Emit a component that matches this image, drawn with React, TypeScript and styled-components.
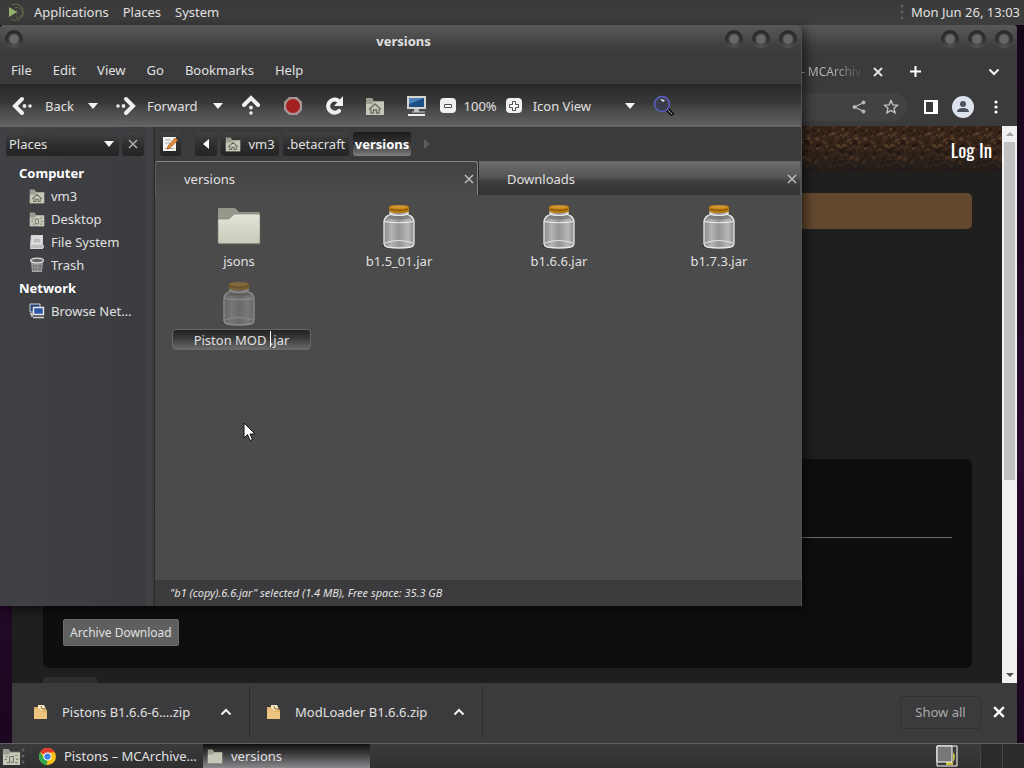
import React from "react";
import styled, { createGlobalStyle, css } from "styled-components";

const Global = createGlobalStyle`
  * { box-sizing: border-box; }
  body { margin: 0; background: #1a0820; font: 13px/18px "Noto Sans", sans-serif; color: #e0e0e0; }
  button, input, select { font: inherit; color: inherit; }
  button { border: 0; background: none; padding: 0; }
  a { color: inherit; text-decoration: none; }
`;

const Desktop = styled.div`
  display: grid;
  grid-template-rows: 25px 1fr 25px;
  height: 100vh;
  min-height: 480px;
  overflow: hidden;
`;

const TopPanel = styled.header`
  display: flex;
  align-items: center;
  padding: 0 4px 2px 8px;
  background: linear-gradient(#3a3a3a, #3e3e3e);
`;
const PanelMenu = styled.nav`
  display: flex;
  gap: 14px;
  margin-left: 7px;
  flex: 1;
`;
const Grip = styled.span`
  width: 4px;
  height: 18px;
  background: radial-gradient(circle, #5c5c5c 1px, transparent 2px) 0 0 / 4px 6px;
`;
const Clock = styled.time`
  margin-left: 7px;
  white-space: nowrap;
`;

const Workspace = styled.div`
  position: relative;
  background: linear-gradient(#140618, #2a0a30 60%, #1b0720);
`;

/* ---- windows ---- */
const frame = css`
  position: absolute;
  top: 0;
  display: flex;
  flex-direction: column;
  background: #3b3b3d;
`;
const BrowserWindow = styled.section`
  ${frame}
  left: 12px;
  right: 7px;
  bottom: 0;
  border-radius: 4px 4px 0 0;
`;
const FilesWindow = styled.section`
  ${frame}
  left: 0;
  width: calc(100% - 222px);
  height: calc(100% - 137px);
  border-right: 1px solid #505050;
  border-radius: 4px 4px 0 0;
  box-shadow: 3px 3px 12px rgba(0, 0, 0, 0.6);
`;
const TitleBar = styled.div`
  display: flex;
  align-items: flex-start;
  gap: 9px;
  height: 31px;
  padding: 5px 4px 0 5px;
  border-radius: 4px 4px 0 0;
  background: linear-gradient(#585858, #4c4c4d 12px, #404042 20px, #3b3b3d);
`;
const Title = styled.h1`
  flex: 1;
  margin: 2px 0 0;
  padding-left: 59px;
  font-size: 13px;
  line-height: 18px;
  text-align: center;
`;
const RoundButton = styled.button`
  width: 18px;
  height: 18px;
  border-radius: 50%;
  background:
    radial-gradient(circle, #686868 4px, transparent 6px),
    linear-gradient(#2a2a2a, #303030 55%, #565852);
`;

/* ---- browser ---- */
const TabStrip = styled.div`
  display: flex;
  align-items: center;
  justify-content: flex-end;
  height: 31px;
  padding-right: 17px;
`;
const BrowserTab = styled.div`
  display: flex;
  align-items: center;
  gap: 12px;
  font-size: 12px;
  white-space: nowrap;
`;
const TabLabel = styled.span`
  display: flex;
  justify-content: flex-end;
  background: linear-gradient(90deg, #b8b8b8 55%, #4a4a4a);
  background-clip: text;
  color: transparent;
`;
const IconButton = styled.button<{ $gap?: number }>`
  display: flex;
  margin-left: ${(p) => p.$gap ?? 0}px;
`;
const AddressRow = styled.div`
  display: flex;
  align-items: center;
  height: 39px;
  padding-right: 18px;
`;
const AddressField = styled.div`
  flex: 1;
  display: flex;
  align-items: center;
  justify-content: flex-end;
  height: 28px;
  padding-right: 8px;
  border-radius: 14px;
  background: #424244;
`;
const Viewport = styled.div`
  flex: 1;
  display: flex;
  min-height: 0;
`;
const Page = styled.main`
  flex: 1;
  display: flex;
  flex-direction: column;
  overflow: hidden;
  background: #1f1f1f;
`;
const Dirt = styled.div`
  position: relative;
  flex: none;
  height: 46px;
  display: flex;
  justify-content: flex-end;
  background: #35231a;
`;
const DirtArt = styled.svg`
  position: absolute;
  inset: 0;
  width: 100%;
  height: 100%;
`;
const LogIn = styled.a`
  position: relative;
  padding: 10px 10px 0 0;
  font: 19px/26px "Oswald", "Liberation Sans Narrow", "Noto Sans", sans-serif;
  color: #fff;
`;
const Banner = styled.div`
  flex: none;
  height: 36px;
  margin: 21px 30px 0 31px;
  border-radius: 5px;
  background: #63482f;
`;
const Card = styled.section`
  flex: 1;
  display: flex;
  flex-direction: column;
  align-items: flex-start;
  margin: 230px 30px 0 31px;
  padding: 78px 20px 22px;
  border-radius: 6px;
  background: #0e0e0e;
`;
const Rule = styled.hr`
  width: 100%;
  margin: 0;
  border: 0;
  border-top: 1px solid #6c6c6c;
`;
const ArchiveButton = styled.button`
  margin-top: auto;
  height: 27px;
  padding: 0 6px;
  border: 1px solid #6c6c6c;
  border-radius: 2px;
  background: #5f5f5f;
  font-size: 12px;
`;
const CutButton = styled.div`
  flex: none;
  width: 54px;
  height: 6px;
  margin: 9px 0 0 31px;
  border-radius: 3px 3px 0 0;
  background: #2e2e2e;
`;
const Scrollbar = styled.div`
  display: flex;
  flex-direction: column;
  align-items: center;
  justify-content: space-between;
  width: 15px;
  padding: 6px 0;
  background: #f1f1f1;
`;
const Thumb = styled.div`
  width: 11px;
  height: 62%;
  margin: 6px 0 auto;
  background: #c1c1c1;
`;
const Arrow = styled.span<{ $up?: boolean }>`
  border: 4px solid transparent;
  ${(p) => (p.$up ? "border-top: 0; border-bottom-color: #a3a3a3;" : "border-bottom: 0; border-top-color: #505050;")}
`;
const DownloadBar = styled.footer`
  display: flex;
  align-items: center;
  height: 60px;
  padding: 0 12px 2px 0;
`;
const Download = styled.div<{ $w: number; $pl: number }>`
  display: flex;
  align-items: center;
  width: ${(p) => p.$w}px;
  height: 50px;
  padding: 0 17px 0 ${(p) => p.$pl}px;
  border-right: 1px solid #2a2a2b;
  white-space: nowrap;
`;
const DownloadName = styled.span`
  flex: 1;
  margin-left: 13px;
`;
const ShowAll = styled.button`
  width: 81px;
  height: 33px;
  margin: 0 12px 0 auto;
  border: 1px solid #303032;
  border-radius: 3px;
  color: #a9a9a9;
`;

/* ---- file manager ---- */
const MenuBar = styled.nav`
  display: flex;
  align-items: center;
  gap: 21px;
  height: 28px;
  padding: 0 0 1px 11px;
`;
const Toolbar = styled.div`
  display: flex;
  align-items: center;
  height: 43px;
  padding: 2px 0 0 12px;
  border-bottom: 2px solid #666;
  background: linear-gradient(#282828, #383838 45%, #4a4a4a 65%, #606060);
`;
const Tool = styled.button<{ $ml?: number }>`
  display: flex;
  align-items: center;
  gap: 11px;
  margin-left: ${(p) => p.$ml ?? 0}px;
`;
const Caret = styled.span`
  border: 5px solid transparent;
  border-top: 6px solid #f4f4f4;
  border-bottom: 0;
`;
const Zoom = styled.span`
  margin: 0 9px 0 8px;
`;
const ViewSelect = styled.label`
  position: relative;
  display: flex;
  align-items: center;
  width: 102px;
  margin-left: 11px;
  ${Caret} { position: absolute; right: 0; pointer-events: none; }
`;
const Select = styled.select`
  appearance: none;
  width: 100%;
  border: 0;
  padding: 0;
  background: none;
  outline: 0;
`;
const Body = styled.div`
  flex: 1;
  display: flex;
  min-height: 0;
`;
const Sidebar = styled.aside`
  width: 155px;
  border-right: 1px solid #29292b;
  background: linear-gradient(90deg, #404144, #3c3c40 145px, #434346 150px, #3a3a3c);
`;
const SideHead = styled.div`
  display: flex;
  gap: 3px;
  padding: 5px 10px 6px 6px;
`;
const raised = css`
  border-radius: 3px;
  background: linear-gradient(#414142, #2c2c2d 60%, #242425);
`;
const PlacesSelect = styled(ViewSelect)`
  ${raised}
  width: 114px;
  height: 24px;
  margin: 0;
  padding-left: 3px;
  ${Caret} { right: 5px; }
`;
const SideClose = styled.button`
  ${raised}
  display: grid;
  place-items: center;
  width: 22px;
  height: 24px;
`;
const PlaceList = styled.ul`
  list-style: none;
  margin: 0;
  padding: 0;
`;
const PlaceHeading = styled.li`
  height: 23px;
  padding-left: 19px;
  font-weight: 700;
  line-height: 23px;
  color: #fff;
`;
const Place = styled.li`
  display: flex;
  align-items: center;
  gap: 6px;
  height: 23px;
  padding: 0 0 2px 29px;
`;
const Main = styled.div`
  flex: 1;
  display: flex;
  flex-direction: column;
  min-width: 0;
`;
const LocationBar = styled.div`
  display: flex;
  align-items: center;
  height: 34px;
  padding-left: 5px;
  gap: 4px;
`;
const Crumb = styled.button<{ $w: number; $active?: boolean; $ml?: number }>`
  ${raised}
  display: flex;
  align-items: center;
  justify-content: center;
  gap: 7px;
  width: ${(p) => p.$w}px;
  height: 24px;
  margin-left: ${(p) => p.$ml ?? 0}px;
  ${(p) =>
    p.$active &&
    "background: linear-gradient(#1c1c1c, #303030 45%, #808080); font-weight: 700; color: #fff;"}
`;
const PathEnd = styled.span`
  display: flex;
  margin-left: 9px;
`;
const Tabs = styled.div`
  display: grid;
  grid-template-columns: 1fr 1fr;
  height: 34px;
`;
const Tab = styled.div<{ $active?: boolean }>`
  display: flex;
  align-items: center;
  justify-content: space-between;
  padding: 0 3px 0 28px;
  border: 1px solid #777;
  border-bottom: 0;
  ${(p) =>
    p.$active
      ? "background: linear-gradient(#424242, #4b4b4b); border-color: #858585; border-left-color: #5a5a5a; border-radius: 3px 3px 0 0;"
      : "background: linear-gradient(#6c6c6c, #555 45%, #3e3e3e 60%, #333); border-color: #666 #555 #555 #2a2a2a;"}
`;
const IconGrid = styled.ul`
  flex: 1;
  display: grid;
  grid-template-columns: repeat(auto-fill, 160px);
  grid-auto-rows: 77px;
  align-content: start;
  list-style: none;
  margin: 0;
  padding: 7px 0 0 4px;
  background: #4b4b4b;
`;
const FileItem = styled.li`
  display: flex;
  flex-direction: column;
  align-items: center;
`;
const FileName = styled.span`
  margin-top: 2px;
`;
const Rename = styled.div`
  position: relative;
  margin: 2px 0 0 5px;
`;
const RenameInput = styled.input`
  display: block;
  width: 139px;
  height: 21px;
  padding: 0;
  border: 1px solid #686868;
  border-radius: 4px;
  background: linear-gradient(#222, #3a3a3a 45%, #6a6a6a);
  text-align: center;
  outline: 0;
`;
const TextCursor = styled.span`
  position: absolute;
  left: 98px;
  top: 2px;
  width: 1px;
  height: 16px;
  background: #fff;
`;
const Status = styled.div`
  height: 26px;
  padding-left: 15px;
  font-size: 11px;
  font-style: italic;
  line-height: 25px;
  background: #3b3b3d;
`;
const Pointer = styled.svg`
  position: absolute;
  left: 243px;
  top: 397px;
`;

/* ---- bottom panel ---- */
const Taskbar = styled.footer`
  display: flex;
  align-items: center;
  border-top: 1px solid #606060;
  background: linear-gradient(#3a3a3c, #303031);
  padding-left: 2px;
`;
const Task = styled.button<{ $active?: boolean; $ml?: number }>`
  display: flex;
  align-items: center;
  gap: 8px;
  width: 167px;
  height: 24px;
  margin-left: ${(p) => p.$ml ?? 0}px;
  padding-left: 4px;
  white-space: nowrap;
  ${(p) => p.$active && "background: linear-gradient(#101010, #3a3a3c 40%, #8a8a8e);"}
`;
const Pager = styled.div`
  display: flex;
  align-items: center;
  margin: 0 22px 0 auto;
`;
const TrayCell = styled.div`
  width: 22px;
  height: 24px;
  border-left: 1px solid #464646;
  background: #2b2b2c;
`;

/* ---- drawings ---- */
const X = ({ s = 9, c = "#d0d0d0", w = 2 }: { s?: number; c?: string; w?: number }) => (
  <svg width={s} height={s} viewBox="0 0 10 10" stroke={c} strokeWidth={w}>
    <path d="M1 1l8 8M9 1l-8 8" />
  </svg>
);
const Chevron = ({ up }: { up?: boolean }) => (
  <svg width="12" height="8" viewBox="0 0 12 8" fill="none" stroke="#f2f2f2" strokeWidth="2">
    <path d={up ? "M1.500 6.500L6 2l4.500 4.500" : "M1.500 1.500L6 6l4.500-4.500"} />
  </svg>
);
const FolderIcon = ({ s = 16, kind }: { s?: number; kind?: "home" | "desk" }) => (
  <svg width={s} height={s} viewBox="0 0 20 20">
    <path d="M1 2h6l2 3h10v14H1z" fill="#9a9d8f" />
    <path d="M1 8h6l2-2h10v13H1z" fill="#c5c8b7" />
    {kind === "home" && (
      <path d="M4 13.500L10 8l6 5.500M6 13v4h2.500v-3h3v3H14v-4" fill="none" stroke="#686c5f" strokeWidth="1.300" />
    )}
    {kind === "desk" && (
      <path d="M8 10h4v6H8zM4 10h2M14 9h2M3 13h2M15 13h2M5 16.500h2M14 16.500h2" fill="none" stroke="#777b6d" strokeWidth="1.200" />
    )}
  </svg>
);
const BigFolder = () => (
  <svg width="48" height="48" viewBox="0 0 48 48">
    <defs>
      <linearGradient id="fold" x2="0" y2="1">
        <stop stopColor="#e4e4d8" />
        <stop offset="1" stopColor="#c8cab9" />
      </linearGradient>
    </defs>
    <path d="M3 7q0-1 2-1h14q2 0 3 2l2 2h19q2 0 2 2v10H3z" fill="#96988b" />
    <path d="M3 17h10q2 0 3-2l2-2q1-1 3-1h23q1 0 1 2v26q0 2-2 2H5q-2 0-2-2z" fill="url(#fold)" stroke="#77796e" strokeWidth=".6" />
    <path d="M4 41.500h41" stroke="#8b8d80" strokeWidth="1" />
  </svg>
);
const Jar = ({ faded }: { faded?: boolean }) => (
  <svg width="48" height="48" viewBox="0 0 48 48" opacity={faded ? 0.42 : 1}>
    <defs>
      <linearGradient id="glass">
        <stop stopColor="#8c8c8c" />
        <stop offset=".25" stopColor="#b4b4b4" />
        <stop offset=".5" stopColor="#959595" />
        <stop offset=".8" stopColor="#b8b8b8" />
        <stop offset="1" stopColor="#8e8e8e" />
      </linearGradient>
    </defs>
    <ellipse cx="21" cy="44" rx="15" ry="3" fill="#2c2c2c" opacity=".45" />
    <path
      d="M15 10h18v3q6 1 6 8v20q0 3-3 4-12 2-24 0-3-1-3-4V21q0-7 6-8z"
      fill="url(#glass)"
      stroke="#e8e8e8"
      strokeWidth="1.300"
    />
    <path d="M15 13q9 2 18 0l3 3q-12 3-24 0z" fill="#6e6e6e" opacity=".7" />
    <path d="M10 19.500q14 2.500 28 0" fill="none" stroke="#f0f0f0" strokeWidth="1.200" />
    <path d="M10 41q14-5 28 0" fill="none" stroke="#e2e2e2" />
    <path d="M15 12q9 3 18 0" fill="none" stroke="#f4f4f4" strokeWidth="1.200" />
    <path d="M14 5q0-2 10-2t10 2v4q-1 2-10 2T14 9z" fill="#b3780e" />
    <ellipse cx="24" cy="5" rx="9" ry="1.800" fill="#cf9430" />
    <path d="M15 7.500q9 2 18 0" fill="none" stroke="#8a5806" />
  </svg>
);
const Zip = () => (
  <svg width="17" height="18" viewBox="0 0 17 18">
    <path d="M2 4h8l5 3v9H2z" fill="#e0b267" />
    <path d="M6 2h6l2 4-4 2-4-3z" fill="#f8e9c7" />
    <path d="M2 6h5l2 3h6v7H2z" fill="#edc380" />
    <path d="M9 3l1 3h4" fill="none" stroke="#8b6427" />
  </svg>
);
const ZoomIcon = ({ plus }: { plus?: boolean }) => (
  <svg width="16" height="16" viewBox="0 0 16 16">
    <rect x="0" y="0" width="16" height="15" rx="4" fill="#f0f0f0" />
    {plus ? (
      <path d="M6.500 3.500h3v3h3v3h-3v3h-3v-3h-3v-3h3z" fill="#fff" stroke="#4c4c4c" />
    ) : (
      <path d="M4.500 6.500h7v3h-7z" fill="#fff" stroke="#4c4c4c" />
    )}
  </svg>
);
const Arrows = ({ turn }: { turn: number }) => (
  <svg width="22" height="22" viewBox="0 0 22 22">
    <g transform={`rotate(${turn} 11 11)`}>
      <path d="M10 4L3 11l7 7" fill="none" stroke="#f0f0f0" strokeWidth="4" strokeLinecap="round" />
      <circle cx="12.500" cy="11" r="1.900" fill="#e8e8e8" />
      <circle cx="18" cy="11" r="1.800" fill="#e8e8e8" />
    </g>
  </svg>
);
const rand = (n: number) => {
  const v = Math.abs(Math.sin(n * 12.9898 + 4.1) * 43758.5453);
  return v - Math.floor(v);
};
const dirtTones = ["#6b4a2c", "#553a22", "#22170f", "#4a3220", "#1c130d"];
const clods = Array.from({ length: 150 }, (_, i) => ({
  x: rand(i) * 46,
  y: rand(i + 300) * 44,
  w: 2 + rand(i + 600) * 4,
  h: 1.5 + rand(i + 900) * 2,
  fill: dirtTones[i % dirtTones.length],
  turn: rand(i + 1200) > 0.5 ? 40 : -30,
}));
const DirtTexture = () => (
  <DirtArt aria-hidden="true">
    <defs>
      <pattern id="dirt" width="48" height="48" patternUnits="userSpaceOnUse">
        {clods.map((c, i) => (
          <rect
            key={i}
            x={c.x}
            y={c.y}
            width={c.w}
            height={c.h}
            rx="1"
            fill={c.fill}
            opacity=".7"
            transform={`rotate(${c.turn} ${c.x} ${c.y})`}
          />
        ))}
      </pattern>
      <linearGradient id="shade" x2="0" y2="1">
        <stop offset=".3" stopColor="#1f1b18" stopOpacity="0" />
        <stop offset=".75" stopColor="#1f1b18" stopOpacity=".45" />
        <stop offset="1" stopColor="#1f1c1a" stopOpacity=".95" />
      </linearGradient>
    </defs>
    <rect width="100%" height="100%" fill="url(#dirt)" />
    <rect width="100%" height="100%" fill="url(#shade)" />
  </DirtArt>
);

const files = ["b1.5_01.jar", "b1.6.6.jar", "b1.7.3.jar"];

export default function App() {
  return (
    <Desktop>
      <Global />
      <TopPanel>
        <svg width="19" height="20" viewBox="0 0 19 20" fill="none" stroke="#65724a">
          <path d="M4 3a8 8 0 1 1-1 14" />
          <path d="M7 6a5 5 0 1 1 0 9" strokeDasharray="3 1" />
          <path d="M8 8a3 3 0 0 1 0 5" />
          <path d="M1 5l8 5-8 5z" fill="#97b16e" stroke="none" />
        </svg>
        <PanelMenu>
          <a href="#applications">Applications</a>
          <a href="#places">Places</a>
          <a href="#system">System</a>
        </PanelMenu>
        <Grip />
        <Clock>Mon Jun 26, 13:03</Clock>
      </TopPanel>

      <Workspace>
        <BrowserWindow>
          <TitleBar>
            <Title />
            <RoundButton aria-label="Minimize browser" />
            <RoundButton aria-label="Maximize browser" />
            <RoundButton aria-label="Close browser" />
          </TitleBar>
          <TabStrip>
            <BrowserTab>
              <TabLabel>– MCArchiv</TabLabel>
              <IconButton aria-label="Close tab"><X s={10} c="#e0e0e0" /></IconButton>
            </BrowserTab>
            <IconButton aria-label="New tab" $gap={26}>
              <svg width="13" height="13" viewBox="0 0 13 13" stroke="#fff" strokeWidth="2"><path d="M6.500 1v11M1 6.500h11" /></svg>
            </IconButton>
            <IconButton aria-label="Search tabs" $gap={66}><Chevron /></IconButton>
          </TabStrip>
          <AddressRow>
            <AddressField>
              <IconButton aria-label="Share">
                <svg width="14" height="14" viewBox="0 0 14 14" fill="#bdbdbd" stroke="#bdbdbd">
                  <path d="M12 2.500L2.500 7l9.500 4.500" fill="none" strokeWidth="1.300" />
                  <circle cx="11.500" cy="2.500" r="1.500" /><circle cx="2.500" cy="7" r="1.500" /><circle cx="11.500" cy="11.500" r="1.500" />
                </svg>
              </IconButton>
              <IconButton aria-label="Bookmark" $gap={17}>
                <svg width="16" height="16" viewBox="0 0 16 16" fill="none" stroke="#c8c8c8" strokeWidth="1.300">
                  <path d="M8 1.500l1.900 4.300 4.700.4-3.600 3.100 1.100 4.600L8 11.500l-4.100 2.400L5 9.300 1.400 6.200l4.700-.4z" />
                </svg>
              </IconButton>
            </AddressField>
            <IconButton aria-label="Side panel" $gap={17}>
              <svg width="14" height="14" viewBox="0 0 14 14"><path d="M1 1h12v12H1z" fill="none" stroke="#fff" strokeWidth="2" /><path d="M9 1h4v12H9z" fill="#fff" /></svg>
            </IconButton>
            <IconButton aria-label="Profile" $gap={14}>
              <svg width="22" height="22" viewBox="0 0 22 22">
                <circle cx="11" cy="11" r="11" fill="#dce3ec" /><circle cx="11" cy="8" r="3" fill="#49535f" /><path d="M5 16q0-4 6-4t6 4z" fill="#49535f" />
              </svg>
            </IconButton>
            <IconButton aria-label="Menu" $gap={19}>
              <svg width="6" height="14" viewBox="0 0 6 14" fill="#fff"><circle cx="3" cy="2" r="1.600" /><circle cx="3" cy="7" r="1.600" /><circle cx="3" cy="12" r="1.600" /></svg>
            </IconButton>
          </AddressRow>
          <Viewport>
            <Page>
              <Dirt>
                <DirtTexture />
                <LogIn href="#login">Log In</LogIn>
              </Dirt>
              <Banner />
              <Card>
                <Rule />
                <ArchiveButton>Archive Download</ArchiveButton>
              </Card>
              <CutButton />
            </Page>
            <Scrollbar><Arrow $up /><Thumb /><Arrow /></Scrollbar>
          </Viewport>
          <DownloadBar>
            <Download $w={238} $pl={20}>
              <Zip /><DownloadName>Pistons B1.6.6-6….zip</DownloadName>
              <IconButton aria-label="Download options"><Chevron up /></IconButton>
            </Download>
            <Download $w={233} $pl={15}>
              <Zip /><DownloadName>ModLoader B1.6.6.zip</DownloadName>
              <IconButton aria-label="Download options"><Chevron up /></IconButton>
            </Download>
            <ShowAll>Show all</ShowAll>
            <IconButton aria-label="Close downloads"><X s={12} c="#fff" /></IconButton>
          </DownloadBar>
        </BrowserWindow>

        <FilesWindow>
          <TitleBar>
            <RoundButton aria-label="Window menu" />
            <Title>versions</Title>
            <RoundButton aria-label="Minimize" />
            <RoundButton aria-label="Maximize" />
            <RoundButton aria-label="Close" />
          </TitleBar>
          <MenuBar>
            {["File", "Edit", "View", "Go", "Bookmarks", "Help"].map((m) => (
              <a key={m} href={`#${m.toLowerCase()}`}>{m}</a>
            ))}
          </MenuBar>
          <Toolbar>
            <Tool><Arrows turn={0} />Back</Tool>
            <Tool aria-label="Back history" $ml={14}><Caret /></Tool>
            <Tool $ml={16}><Arrows turn={180} />Forward</Tool>
            <Tool aria-label="Forward history" $ml={15}><Caret /></Tool>
            <Tool aria-label="Up" $ml={17}><Arrows turn={90} /></Tool>
            <Tool aria-label="Stop" $ml={20}>
              <svg width="22" height="22" viewBox="0 0 22 22"><path d="M7 2h8l5 5v8l-5 5H7l-5-5V7z" fill="#a89494" /><circle cx="11" cy="11" r="7" fill="#a52020" /></svg>
            </Tool>
            <Tool aria-label="Reload" $ml={19}>
              <svg width="22" height="22" viewBox="0 0 22 22"><path d="M15 5.500A6.500 6.500 0 1 0 16 16" fill="none" stroke="#f0f0f0" strokeWidth="4.200" strokeLinecap="round" /><path d="M20 1v10H11z" fill="#f0f0f0" /></svg>
            </Tool>
            <Tool aria-label="Home" $ml={20}><FolderIcon s={20} kind="home" /></Tool>
            <Tool aria-label="Computer" $ml={21}>
              <svg width="22" height="22" viewBox="0 0 22 22">
                <path d="M1 1h19v13H1z" fill="#d4d4cc" /><path d="M3 3h15v9H3z" fill="#1f4f86" /><path d="M3 3h15L3 9z" fill="#4d82ba" />
                <path d="M8 14h5v3H8z" fill="#bbb" /><path d="M2 19h17v2H2z" fill="#f0f0ea" /><path d="M6 17h13" stroke="#ccc" />
              </svg>
            </Tool>
            <Tool aria-label="Zoom out" $ml={12}><ZoomIcon /></Tool>
            <Zoom>100%</Zoom>
            <Tool aria-label="Zoom in"><ZoomIcon plus /></Tool>
            <ViewSelect>
              <Select aria-label="View"><option>Icon View</option></Select>
              <Caret />
            </ViewSelect>
            <Tool aria-label="Search" $ml={18}>
              <svg width="22" height="22" viewBox="0 0 22 22">
                <path d="M14 14l6 6" stroke="#161616" strokeWidth="4" /><path d="M15 15l4 4" stroke="#aaa" strokeWidth="1" />
                <circle cx="9" cy="9" r="7.500" fill="#3b3d4c" stroke="#5b5fc0" strokeWidth="1.600" /><path d="M7 4l5 1-2 2z" fill="#e8e8f4" />
              </svg>
            </Tool>
          </Toolbar>
          <Body>
            <Sidebar>
              <SideHead>
                <PlacesSelect>
                  <Select aria-label="Side pane"><option>Places</option></Select>
                  <Caret />
                </PlacesSelect>
                <SideClose aria-label="Close side pane"><X s={10} c="#b0b0b0" w={1.5} /></SideClose>
              </SideHead>
              <PlaceList>
                <PlaceHeading>Computer</PlaceHeading>
                <Place><FolderIcon kind="home" />vm3</Place>
                <Place><FolderIcon kind="desk" />Desktop</Place>
                <Place>
                  <svg width="16" height="16" viewBox="0 0 16 16"><path d="M2 1h12v10v4H1v-4z" fill="#d4d4d4" /><path d="M1 11h14v3H1z" fill="#bdbdbd" /><path d="M4 4h8v5H4z" fill="#bbb" stroke="#e8e8e8" /></svg>
                  File System
                </Place>
                <Place>
                  <svg width="16" height="16" viewBox="0 0 16 16"><path d="M2 4h12l-1 11H3z" fill="#a4a4a4" /><path d="M4 6l1 8M7 6v8M10 6v8M12 6l-1 8M3 9h10M3 12h10" stroke="#666" strokeWidth=".7" /><ellipse cx="8" cy="3.500" rx="6.500" ry="2.300" fill="#666" stroke="#ddd" strokeWidth="1.200" /></svg>
                  Trash
                </Place>
                <PlaceHeading>Network</PlaceHeading>
                <Place>
                  <svg width="16" height="16" viewBox="0 0 16 16"><path d="M1 1h10v8H1z" fill="#26417c" stroke="#cdd3da" /><path d="M4.500 4.500h10v7h-10z" fill="#2b57a8" stroke="#e8e8e4" strokeWidth="1.400" /><path d="M4 14.500h11M1 11h2v3" stroke="#cfd2d6" fill="none" strokeWidth="1.500" /></svg>
                  Browse Net…
                </Place>
              </PlaceList>
            </Sidebar>
            <Main>
              <LocationBar>
                <Crumb aria-label="Edit location" $w={21}>
                  <svg width="17" height="18" viewBox="0 0 17 18"><path d="M1 2h13v14H1z" fill="#f3f3f0" /><path d="M3 5h6M3 8h5M3 13.500h9" stroke="#aaa" /><path d="M13 3l-7 8-1 3 3-1 8-8z" fill="#e08a35" stroke="#8d4c15" strokeWidth=".6" /></svg>
                </Crumb>
                <Crumb aria-label="Scroll path left" $w={22} $ml={10}>
                  <svg width="6" height="10" viewBox="0 0 6 10"><path d="M6 0v10L0 5z" fill="#fff" /></svg>
                </Crumb>
                <Crumb $w={58}><FolderIcon kind="home" />vm3</Crumb>
                <Crumb $w={66}>.betacraft</Crumb>
                <Crumb $w={58} $active>versions</Crumb>
                <PathEnd>
                  <svg width="6" height="10" viewBox="0 0 6 10"><path d="M0 0v10l6-5z" fill="#5c5c5c" /></svg>
                </PathEnd>
              </LocationBar>
              <Tabs>
                <Tab $active>versions<IconButton aria-label="Close versions tab"><X s={10} c="#bbb" w={1.5} /></IconButton></Tab>
                <Tab>Downloads<IconButton aria-label="Close Downloads tab"><X s={10} c="#bbb" w={1.5} /></IconButton></Tab>
              </Tabs>
              <IconGrid>
                <FileItem><BigFolder /><FileName>jsons</FileName></FileItem>
                {files.map((f) => (
                  <FileItem key={f}><Jar /><FileName>{f}</FileName></FileItem>
                ))}
                <FileItem>
                  <Jar faded />
                  <Rename>
                    <RenameInput aria-label="File name" defaultValue="Piston MOD .jar" />
                    <TextCursor />
                  </Rename>
                </FileItem>
              </IconGrid>
              <Status>"b1 (copy).6.6.jar" selected (1.4 MB), Free space: 35.3 GB</Status>
            </Main>
          </Body>
        </FilesWindow>
        <Pointer width="13" height="20" viewBox="0 0 13 20">
          <path d="M1 1v15l3.500-3.500L7 18.500l2.500-1L7 12h5z" fill="#fff" stroke="#111" />
        </Pointer>
      </Workspace>

      <Taskbar>
        <IconButton aria-label="Show desktop"><FolderIcon s={19} kind="desk" /></IconButton>
        <Grip />
        <Task $ml={10}>
          <svg width="17" height="17" viewBox="0 0 18 18">
            <circle cx="9" cy="9" r="9" fill="#fbc116" />
            <path d="M9 9L1.200 4.500A9 9 0 0 1 16.800 4.500L9 5z" fill="#e33b2e" />
            <path d="M1.200 4.500L5.500 11 9 13.500 8 18A9 9 0 0 1 1.200 4.500z" fill="#2da94f" />
            <circle cx="9" cy="9" r="4.300" fill="#fff" /><circle cx="9" cy="9" r="3.300" fill="#3f7de8" />
          </svg>
          Pistons – MCArchive…
        </Task>
        <Task $active $ml={1}><FolderIcon />versions</Task>
        <Pager>
          <svg width="22" height="22" viewBox="0 0 22 22">
            <path d="M1 1h20v20H1z" fill="#3b3b3b" stroke="#fff" /><path d="M17 7q4 5 0 10v3h-7v-3h7z" fill="#c6b83a" /><path d="M1 1h15v16H1z" fill="#777" stroke="#fff" />
          </svg>
        </Pager>
        <TrayCell /><TrayCell />
      </Taskbar>
    </Desktop>
  );
}
